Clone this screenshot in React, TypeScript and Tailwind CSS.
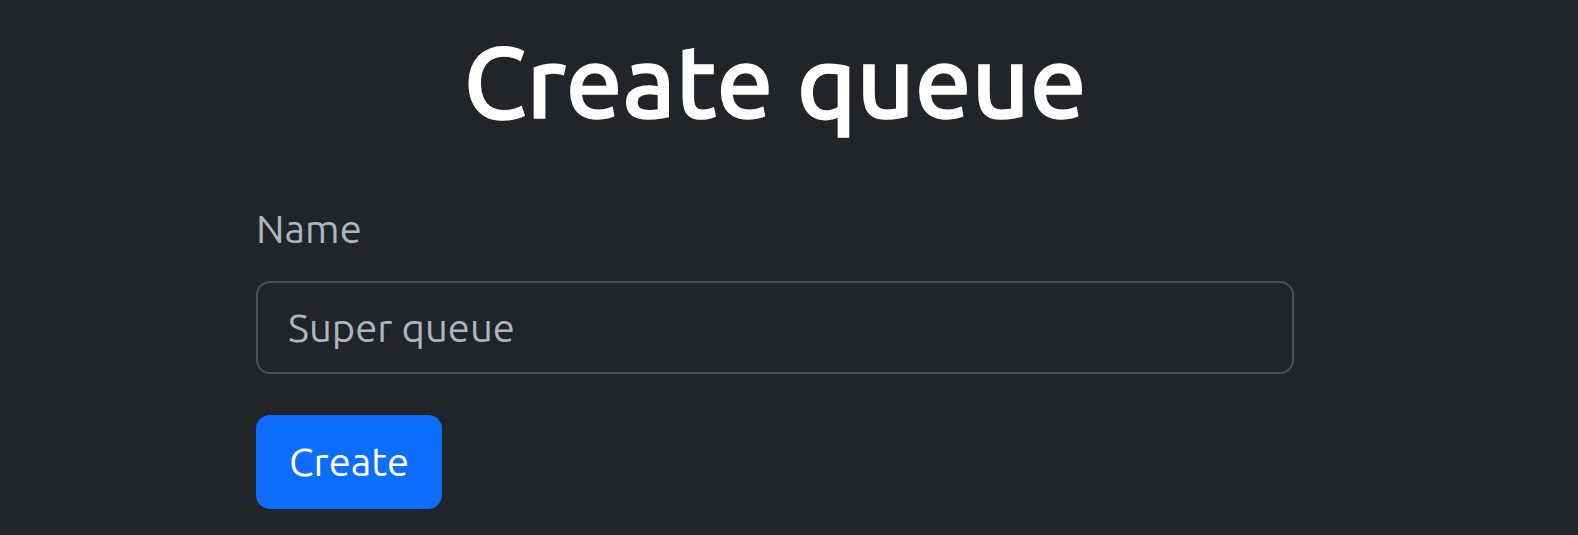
import React from 'react';

export default function App() {
  return (
    <div className="min-h-[535px] bg-[#212529] text-white font-['Ubuntu','Noto_Sans',sans-serif] pt-[22px]">
      <h1 className="text-center text-[101px] leading-[118px] font-medium pr-[28px] [-webkit-text-stroke:1.5px_white]">Create queue</h1>
      <form className="w-[1038px] ml-[256px] mt-[60px]" onSubmit={(e) => e.preventDefault()}>
        <label htmlFor="name" className="block text-[40px] leading-[58px] text-[#adb5bd]">Name</label>
        <input
          id="name"
          type="text"
          placeholder="Super queue"
          className="mt-[23px] block w-full h-[93px] px-[30px] rounded-[14px] border-2 border-[#495057] bg-[#212529] text-[40px] text-[#dee2e6] placeholder:text-[#adb5bd] outline-none"
        />
        <button
          type="submit"
          className="mt-[41px] h-[94px] w-[186px] rounded-[14px] bg-[#0d6efd] text-white text-[40px]"
        >
          Create
        </button>
      </form>
    </div>
  );
}
